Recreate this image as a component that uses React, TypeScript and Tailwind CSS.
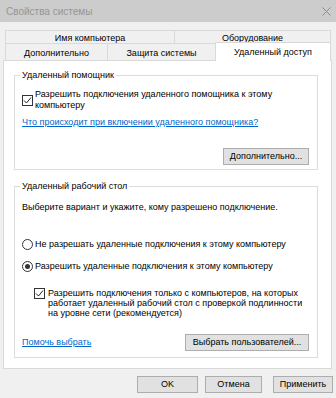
import { ReactNode } from "react";

type TabProps = {
  label: string;
  className: string;
};

const Tab = ({ label, className }: TabProps) => (
  <div
    className={
      "flex items-center justify-center border-l border-t border-[#d9d9d9] " +
      className
    }
  >
    {label}
  </div>
);

const CheckBox = ({ checked = true }: { checked?: boolean }) => (
  <div className="w-[11px] h-[11px] shrink-0 border border-[#333333] bg-white">
    {checked && (
      <svg width="9" height="9" viewBox="0 0 9 9">
        <path d="M1 4.5 L3.5 7 L8 1.5" fill="none" stroke="#222222" strokeWidth="1" />
      </svg>
    )}
  </div>
);

const Radio = ({ checked = false }: { checked?: boolean }) => (
  <div className="w-[11px] h-[11px] shrink-0 rounded-full border border-[#333333] bg-white flex items-center justify-center">
    {checked && <div className="w-[5px] h-[5px] rounded-full bg-[#333333]" />}
  </div>
);

const Button = ({ children, className }: { children: ReactNode; className: string }) => (
  <div
    className={
      "h-[17px] flex items-center justify-center bg-[#e1e1e1] border border-[#adadad] leading-[15px] " +
      className
    }
  >
    {children}
  </div>
);

const GroupBox = ({
  title,
  className,
  children,
}: {
  title: string;
  className: string;
  children: ReactNode;
}) => (
  <div className={"relative w-[304px] border border-[#dcdcdc] " + className}>
    {/* caption sits over the top border */}
    <span className="absolute -top-[7px] left-[5px] px-[2px] bg-white leading-[12px]">
      {title}
    </span>
    {children}
  </div>
);

export default function App() {
  return (
    <div className="w-[336px] h-[398px] overflow-hidden bg-[#f0f0f0] text-black text-[9px] font-['Liberation_Sans',Arial,sans-serif]">
      {/* title bar */}
      <div className="h-[22px] bg-[#cccccc] flex items-center justify-between pl-[6px] pr-[5px]">
        <span className="text-[10px] text-[#969696]">Свойства системы</span>
        <svg width="9" height="9" viewBox="0 0 9 9">
          <path d="M0.5 0.5 L8.5 8.5 M8.5 0.5 L0.5 8.5" stroke="#8a8a8a" strokeWidth="1" />
        </svg>
      </div>

      {/* tabs */}
      <div className="mt-[8px] ml-[5px] w-[326px]">
        <div className="flex h-[13px] leading-[11px]">
          <Tab label="Имя компьютера" className="w-[169px] pt-[2px]" />
          <Tab label="Оборудование" className="w-[157px] border-r pt-[2px]" />
        </div>
        <div className="flex items-end h-[17px] leading-[11px]">
          <Tab label="Дополнительно" className="w-[102px] h-[17px] pt-[2px]" />
          <Tab label="Защита системы" className="w-[108px] h-[17px] pt-[2px]" />
          <Tab
            label="Удаленный доступ"
            className="w-[116px] h-[19px] -mb-[1px] border-r bg-white relative z-10"
          />
        </div>
      </div>

      {/* tab page */}
      <div className="ml-[3px] w-[329px] h-[309px] bg-white border border-[#d9d9d9] pl-[10px] pt-[14px]">
        <GroupBox title="Удаленный помощник" className="pl-[7px] pr-[8px] pt-[13px] pb-[4px]">
          <div className="flex items-center gap-[2px] leading-[11px]">
            <CheckBox />
            <span>
              Разрешить подключения удаленного помощника к этому
              <br />
              компьютеру
            </span>
          </div>
          <div className="mt-[6px] leading-[11px] text-[#0066cc] underline">
            Что происходит при включении удаленного помощника?
          </div>
          <div className="mt-[20px] flex justify-end">
            <Button className="w-[86px]">Дополнительно...</Button>
          </div>
        </GroupBox>

        <GroupBox
          title="Удаленный рабочий стол"
          className="mt-[16px] pl-[7px] pr-[8px] pt-[15px] pb-[6px]"
        >
          <div className="leading-[11px]">
            Выберите вариант и укажите, кому разрешено подключение.
          </div>
          <div className="mt-[26px] flex items-center gap-[2px] leading-[11px]">
            <Radio />
            <span>Не разрешать удаленные подключения к этому компьютеру</span>
          </div>
          <div className="mt-[11px] flex items-center gap-[2px] leading-[11px]">
            <Radio checked />
            <span>Разрешить удаленные подключения к этому компьютеру</span>
          </div>
          <div className="mt-[16px] ml-[12px] flex items-start gap-[3px] leading-[10px]">
            <CheckBox />
            <span>
              Разрешить подключения только с компьютеров, на которых
              <br />
              работает удаленный рабочий стол с проверкой подлинности
              <br />
              на уровне сети (рекомендуется)
            </span>
          </div>
          <div className="mt-[16px] flex items-center justify-between">
            <span className="text-[#0066cc] underline leading-[11px]">Помочь выбрать</span>
            <Button className="w-[124px]">Выбрать пользователей...</Button>
          </div>
        </GroupBox>
      </div>

      {/* dialog buttons */}
      <div className="mt-[7px] flex">
        <Button className="ml-[137px] w-[61px]">OK</Button>
        <Button className="ml-[7px] w-[57px]">Отмена</Button>
        <Button className="ml-[11px] w-[60px]">Применить</Button>
      </div>
    </div>
  );
}
